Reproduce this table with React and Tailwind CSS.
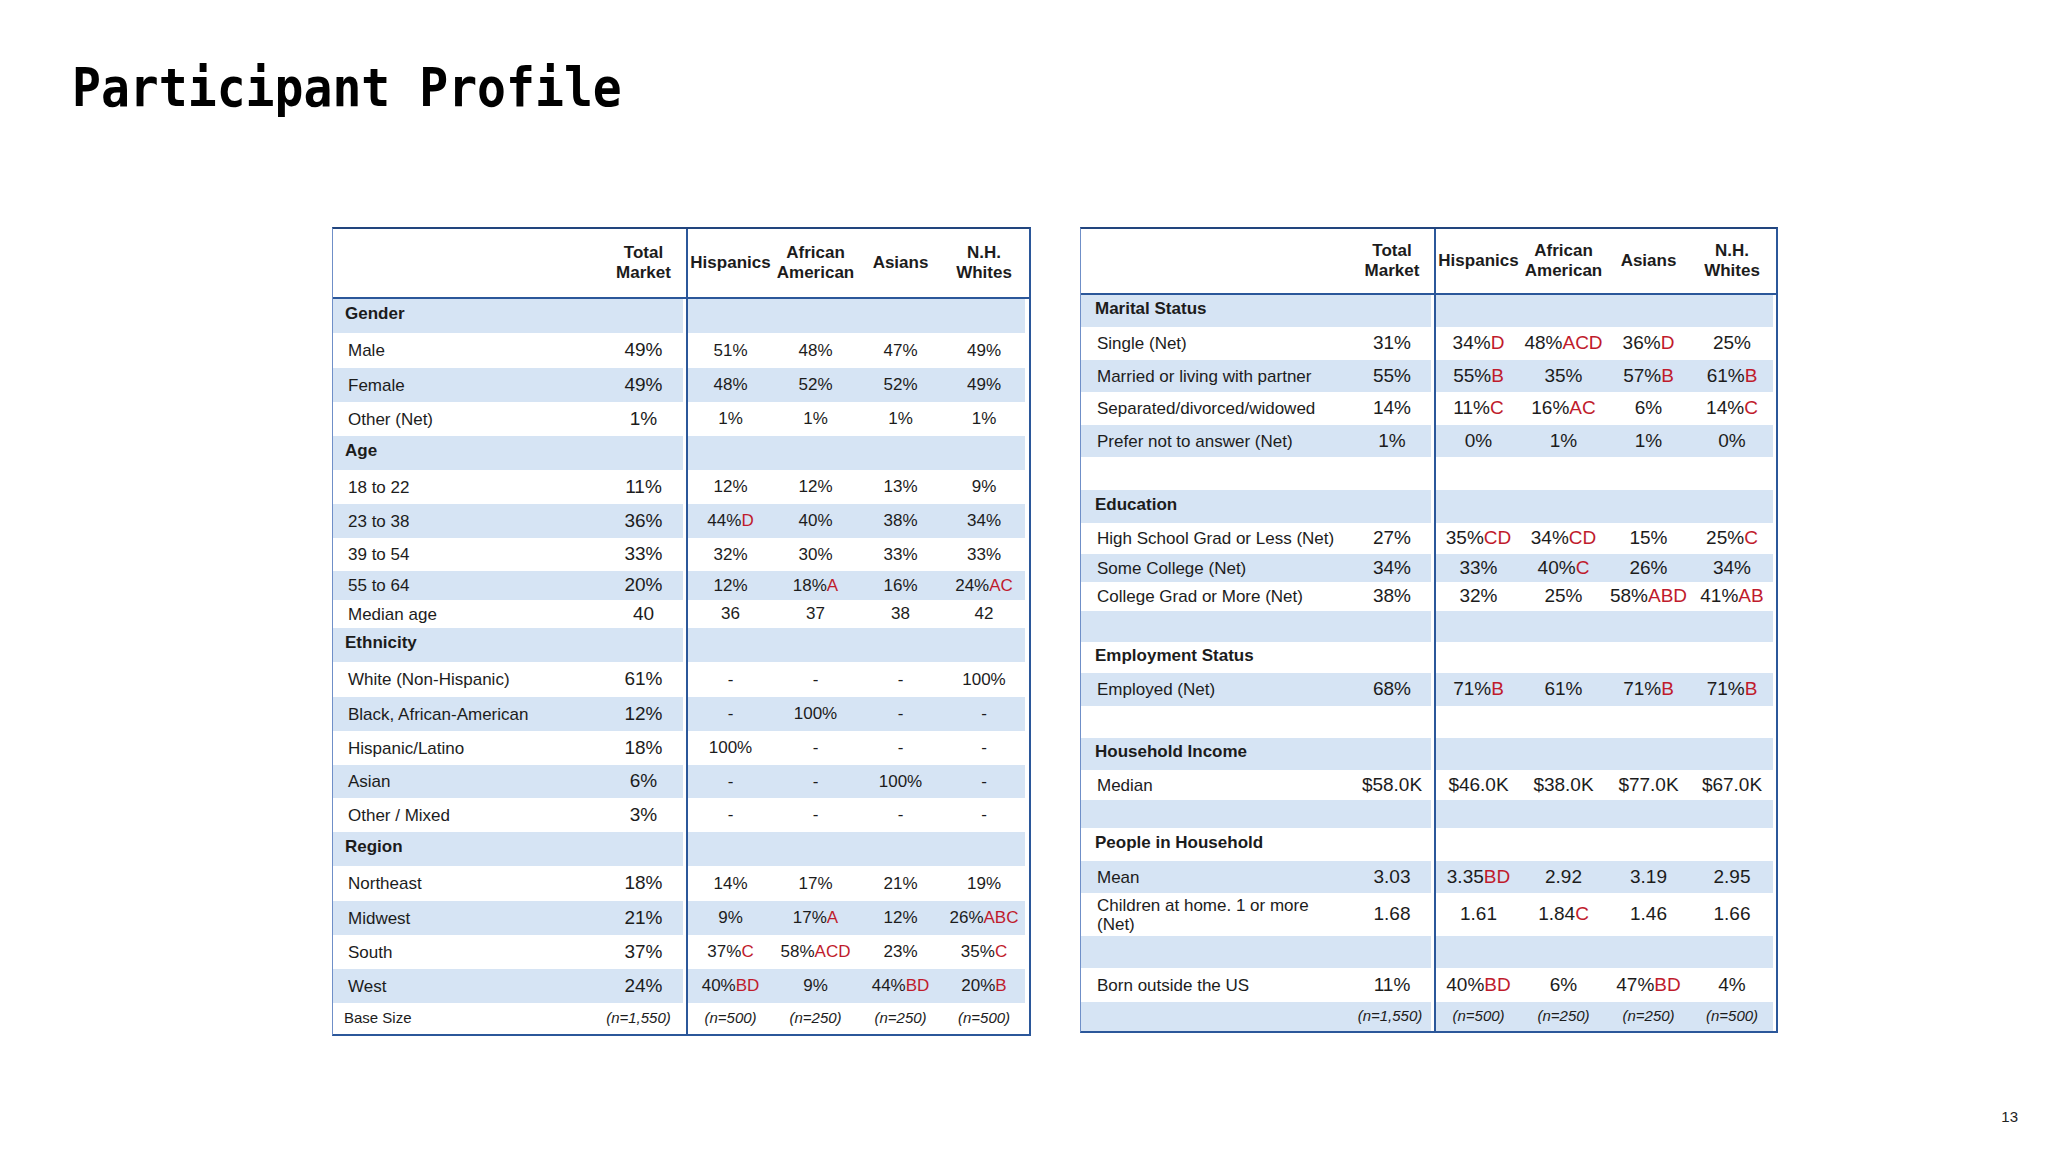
import React from "react";

const BLUE = "bg-[#d6e4f4]";

const leftRows = [
  { kind: "section", label: "Gender", h: "h-[34px]" },
  { label: "Male", tm: "49%", vals: ["51%", "48%", "47%", "49%"], h: "h-[35px]" },
  { label: "Female", tm: "49%", vals: ["48%", "52%", "52%", "49%"], h: "h-[34px]" },
  { label: "Other (Net)", tm: "1%", vals: ["1%", "1%", "1%", "1%"], h: "h-[34px]" },
  { kind: "section", label: "Age", h: "h-[34px]" },
  { label: "18 to 22", tm: "11%", vals: ["12%", "12%", "13%", "9%"], h: "h-[34px]" },
  { label: "23 to 38", tm: "36%", vals: ["44%D", "40%", "38%", "34%"], h: "h-[34px]" },
  { label: "39 to 54", tm: "33%", vals: ["32%", "30%", "33%", "33%"], h: "h-[33px]" },
  { label: "55 to 64", tm: "20%", vals: ["12%", "18%A", "16%", "24%AC"], h: "h-[29px]" },
  { label: "Median age", tm: "40", vals: ["36", "37", "38", "42"], h: "h-[28px]" },
  { kind: "section", label: "Ethnicity", h: "h-[34px]" },
  { label: "White (Non-Hispanic)", tm: "61%", vals: ["-", "-", "-", "100%"], h: "h-[35px]" },
  { label: "Black, African-American", tm: "12%", vals: ["-", "100%", "-", "-"], h: "h-[34px]" },
  { label: "Hispanic/Latino", tm: "18%", vals: ["100%", "-", "-", "-"], h: "h-[34px]" },
  { label: "Asian", tm: "6%", vals: ["-", "-", "100%", "-"], h: "h-[33px]" },
  { label: "Other / Mixed", tm: "3%", vals: ["-", "-", "-", "-"], h: "h-[34px]" },
  { kind: "section", label: "Region", h: "h-[34px]" },
  { label: "Northeast", tm: "18%", vals: ["14%", "17%", "21%", "19%"], h: "h-[35px]" },
  { label: "Midwest", tm: "21%", vals: ["9%", "17%A", "12%", "26%ABC"], h: "h-[34px]" },
  { label: "South", tm: "37%", vals: ["37%C", "58%ACD", "23%", "35%C"], h: "h-[34px]" },
  { label: "West", tm: "24%", vals: ["40%BD", "9%", "44%BD", "20%B"], h: "h-[34px]" },
  { kind: "base", label: "Base Size", tm: "(n=1,550)", vals: ["(n=500)", "(n=250)", "(n=250)", "(n=500)"], h: "h-[31px]" },
];

const rightRows = [
  { kind: "section", label: "Marital Status", h: "h-[32px]" },
  { label: "Single (Net)", tm: "31%", vals: ["34%D", "48%ACD", "36%D", "25%"], h: "h-[33px]" },
  { label: "Married or living with partner", tm: "55%", vals: ["55%B", "35%", "57%B", "61%B"], h: "h-[32px]" },
  { label: "Separated/divorced/widowed", tm: "14%", vals: ["11%C", "16%AC", "6%", "14%C"], h: "h-[33px]" },
  { label: "Prefer not to answer (Net)", tm: "1%", vals: ["0%", "1%", "1%", "0%"], h: "h-[32px]" },
  { kind: "blank", h: "h-[33px]" },
  { kind: "section", label: "Education", h: "h-[33px]" },
  { label: "High School Grad or Less (Net)", tm: "27%", vals: ["35%CD", "34%CD", "15%", "25%C"], h: "h-[31px]" },
  { label: "Some College (Net)", tm: "34%", vals: ["33%", "40%C", "26%", "34%"], h: "h-[28px]" },
  { label: "College Grad or More (Net)", tm: "38%", vals: ["32%", "25%", "58%ABD", "41%AB"], h: "h-[29px]" },
  { kind: "blank", h: "h-[31px]" },
  { kind: "section", label: "Employment Status", h: "h-[31px]" },
  { label: "Employed (Net)", tm: "68%", vals: ["71%B", "61%", "71%B", "71%B"], h: "h-[33px]" },
  { kind: "blank", h: "h-[32px]" },
  { kind: "section", label: "Household Income", h: "h-[32px]" },
  { label: "Median", tm: "$58.0K", vals: ["$46.0K", "$38.0K", "$77.0K", "$67.0K"], h: "h-[30px]" },
  { kind: "blank", h: "h-[28px]" },
  { kind: "section", label: "People in Household", h: "h-[33px]" },
  { label: "Mean", tm: "3.03", vals: ["3.35BD", "2.92", "3.19", "2.95"], h: "h-[32px]" },
  { label: ["Children at home. 1 or more", "(Net)"], tm: "1.68", vals: ["1.61", "1.84C", "1.46", "1.66"], h: "h-[43px]" },
  { kind: "blank", h: "h-[32px]" },
  { label: "Born outside the US", tm: "11%", vals: ["40%BD", "6%", "47%BD", "4%"], h: "h-[34px]" },
  { kind: "base", label: "", tm: "(n=1,550)", vals: ["(n=500)", "(n=250)", "(n=250)", "(n=500)"], h: "h-[29px]" },
];

// splits "26%ABC" into the value and the red significance letters
function Value({ v }) {
  const m = v.match(/^(.*?\d%?)([A-D]+)$/);
  if (!m) return <span>{v}</span>;
  return (
    <span>
      {m[1]}
      <span className="text-[#bf1b2c]">{m[2]}</span>
    </span>
  );
}

const cellW = ["w-[85px]", "w-[85px]", "w-[85px]", "w-[82px]"];

function Row({ row, blue, side }) {
  const bg = blue ? BLUE : "bg-white";
  const isL = side === "L";
  const labelW = isL ? "w-[271px]" : "w-[273px]";
  const tmW = isL ? "w-[79px]" : "w-[76px]";
  const kind = row.kind || "item";

  let label = null;
  if (kind === "section") {
    label = (
      <div className={`${labelW} ${isL ? "pl-[12px]" : "pl-[14px]"} pb-[4px] text-[17px] font-bold`}>
        {row.label}
      </div>
    );
  } else if (kind === "base") {
    label = <div className={`${labelW} pl-[11px] text-[15px]`}>{row.label}</div>;
  } else if (kind === "item") {
    label = (
      <div className={`${labelW} ${isL ? "pl-[15px]" : "pl-[16px]"} text-[17px] leading-[19px]`}>
        {Array.isArray(row.label) ? (
          <>
            {row.label[0]}
            <br />
            {row.label[1]}
          </>
        ) : (
          row.label
        )}
      </div>
    );
  } else {
    label = <div className={labelW} />;
  }

  let tm = null;
  if (kind === "item") {
    tm = <div className={`${tmW} text-center text-[19px]`}>{row.tm}</div>;
  } else if (kind === "base") {
    tm = (
      <div className={`${tmW} text-center text-[15px] italic ${isL ? "pr-[10px]" : "pr-[4px]"}`}>
        {row.tm}
      </div>
    );
  } else {
    tm = <div className={tmW} />;
  }

  return (
    <div className={`flex ${row.h}`}>
      <div className="flex w-[353px] pr-[3px]">
        <div className={`flex flex-1 items-center ${bg}`}>
          {label}
          {tm}
        </div>
      </div>
      <div className="flex border-l-2 border-[#2b579a] pr-[3px]">
        <div className={`flex items-center ${bg}`}>
          {[0, 1, 2, 3].map((i) => (
            <div
              key={i}
              className={`${cellW[i]} text-center ${
                kind === "base" ? "text-[15px] italic" : isL ? "text-[17px]" : "text-[19px]"
              }`}
            >
              {row.vals ? <Value v={row.vals[i]} /> : null}
            </div>
          ))}
        </div>
      </div>
    </div>
  );
}

function Table({ rows, side }) {
  const isL = side === "L";
  return (
    <div
      className={`flex flex-col ${isL ? "w-[699px]" : "w-[698px]"} border-2 border-l border-[#2b579a] border-t-[#22457e] border-l-[#6f8fc8] bg-white`}
    >
      <div
        className={`flex ${isL ? "h-[70px]" : "h-[66px]"} border-b-2 border-[#2b579a] text-[17px] font-bold leading-[20px]`}
      >
        <div className="flex w-[353px] items-center pr-[3px]">
          <div className={isL ? "w-[271px]" : "w-[273px]"} />
          <div className={`${isL ? "w-[79px]" : "w-[76px]"} text-center`}>
            Total
            <br />
            Market
          </div>
        </div>
        <div className="flex items-center border-l-2 border-[#2b579a] pr-[3px]">
          <div className="w-[85px] text-center">Hispanics</div>
          <div className="w-[85px] text-center">
            African
            <br />
            American
          </div>
          <div className="w-[85px] text-center">Asians</div>
          <div className="w-[82px] text-center">
            N.H.
            <br />
            Whites
          </div>
        </div>
      </div>
      {rows.map((r, i) => (
        <Row key={i} row={r} blue={i % 2 === 0} side={side} />
      ))}
    </div>
  );
}

export default function App() {
  return (
    <div className="relative h-[1152px] w-[2048px] overflow-hidden bg-white font-['Liberation_Sans',Arial,sans-serif] text-[#1c1c1c]">
      <div className="pl-[72px] pt-[61px]">
        <h1 className="origin-left scale-x-[0.89] font-['DejaVu_Sans_Mono','Liberation_Mono',monospace] text-[54px] font-bold leading-[54px] text-black">
          Participant Profile
        </h1>
      </div>
      <div className="ml-[332px] mt-[112px] flex items-start gap-[49px]">
        <Table rows={leftRows} side="L" />
        <Table rows={rightRows} side="R" />
      </div>
      <div className="absolute bottom-[24px] right-[30px] text-[15px] text-[#222]">13</div>
    </div>
  );
}
